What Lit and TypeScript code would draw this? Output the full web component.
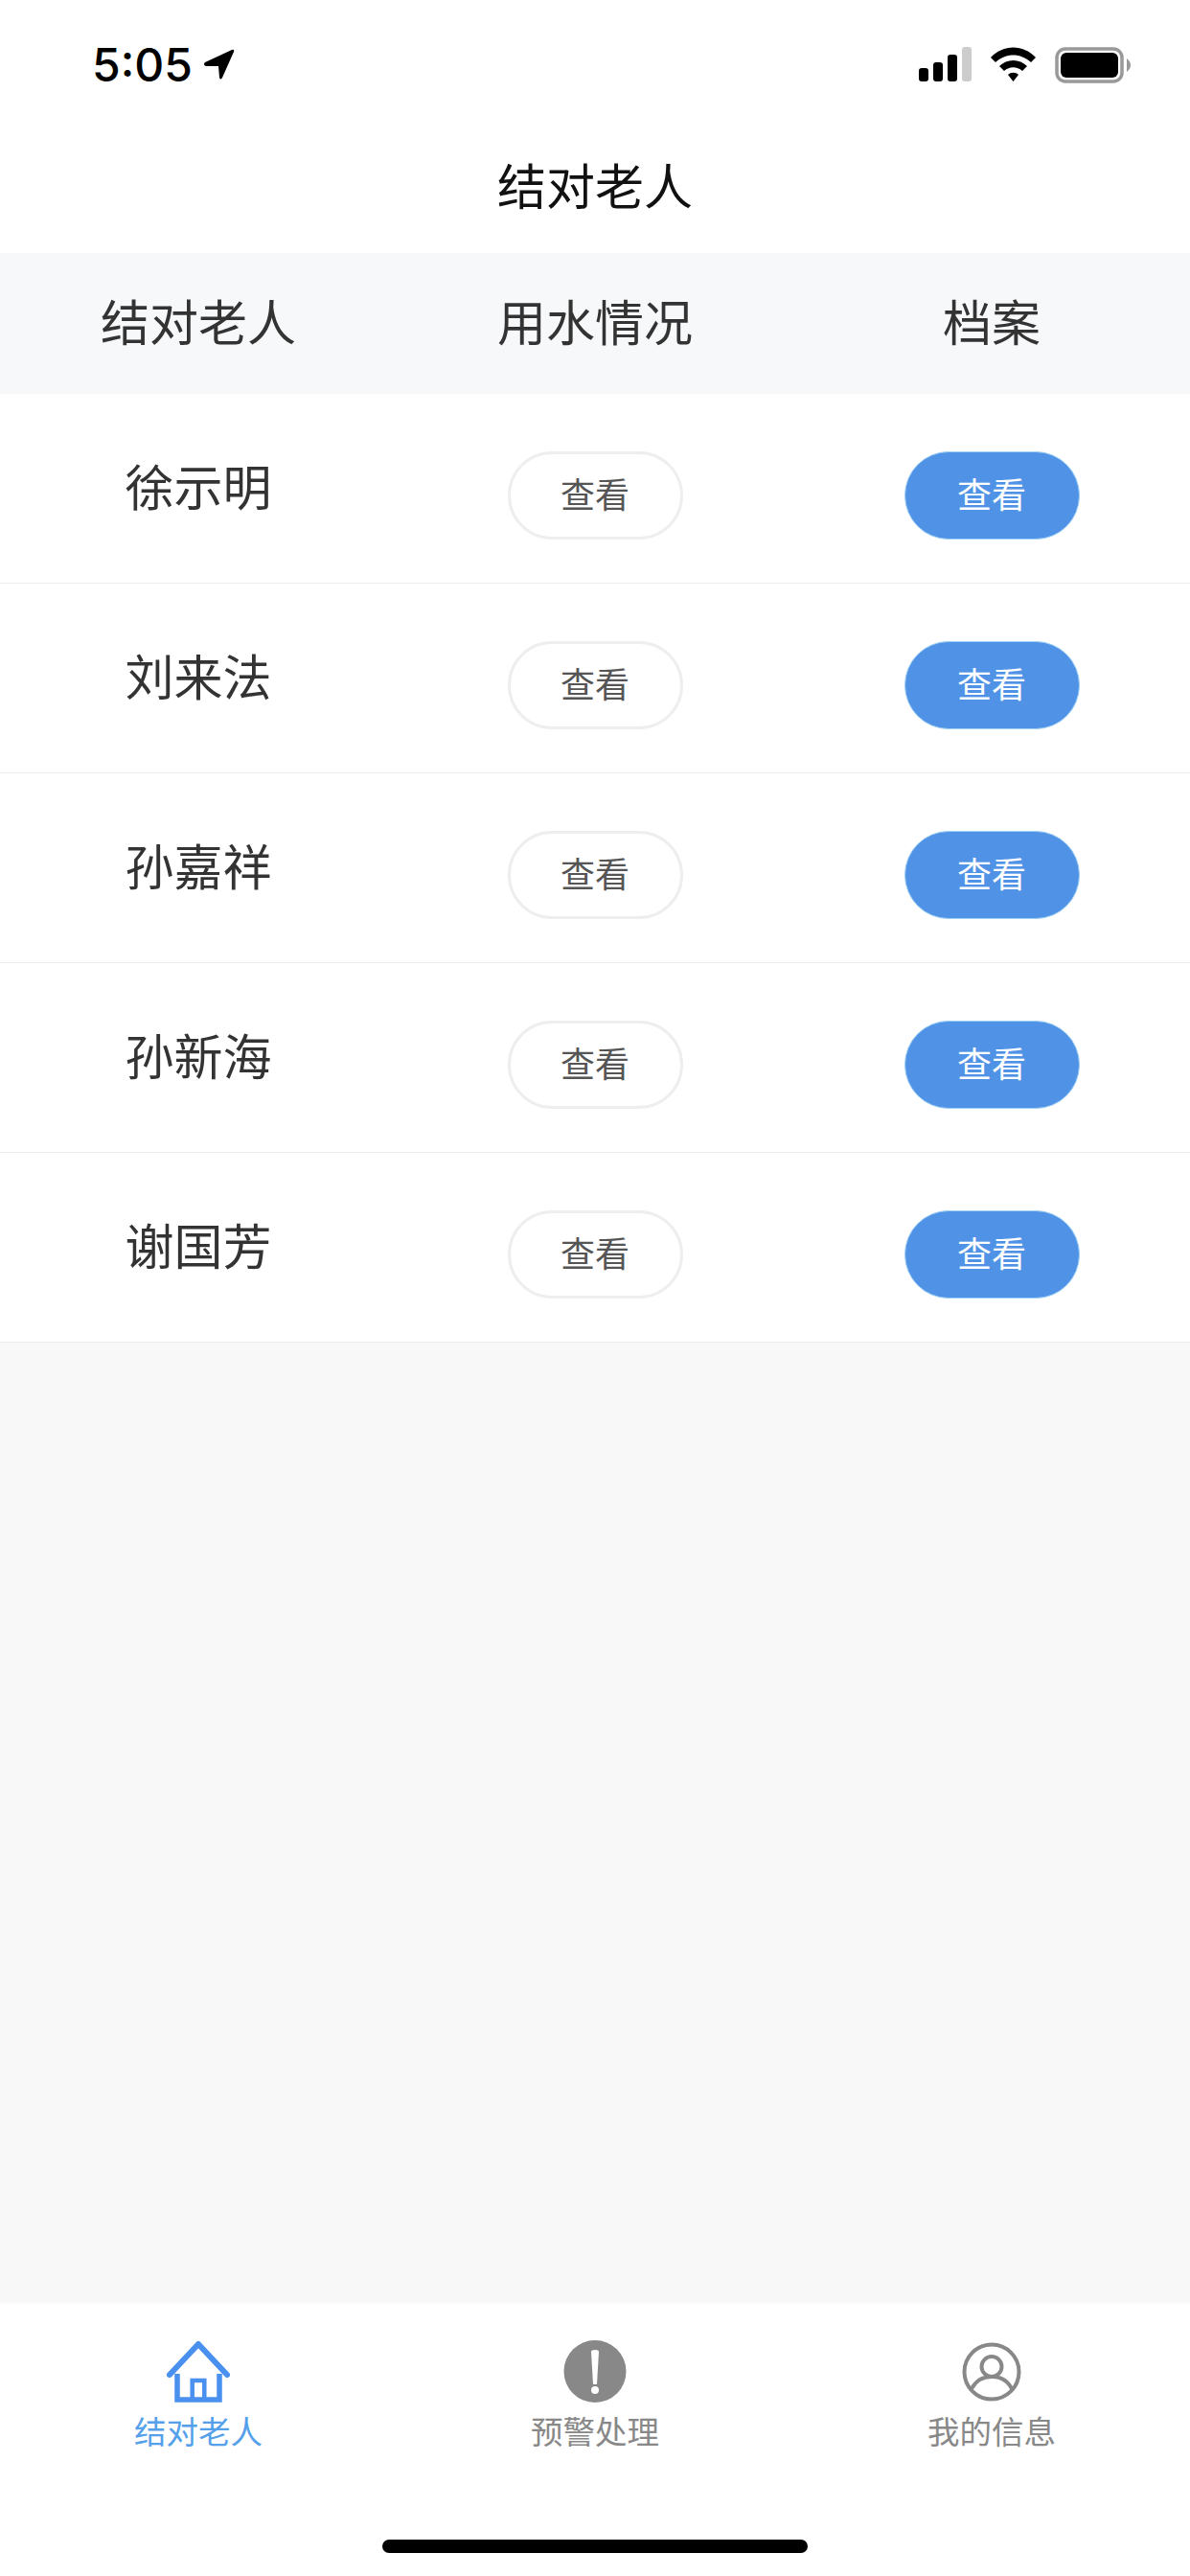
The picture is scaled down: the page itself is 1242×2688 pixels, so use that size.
import { LitElement, html, css, svg } from 'lit';
import { customElement } from 'lit/decorators.js';

const ELDERS = ['徐示明', '刘来法', '孙嘉祥', '孙新海', '谢国芳'];

const ICONS = {
    home: svg`<path d="M3 37 L33 5 L63 37" fill="none" stroke="#4a90ee" stroke-width="6" stroke-linecap="round" stroke-linejoin="round"/>
        <path d="M11 36 V63 H55 V36" fill="none" stroke="#4a90ee" stroke-width="5.500"/>
        <path d="M26.700 63 V43 H39.300 V63" fill="none" stroke="#4a90ee" stroke-width="4.500"/>`,
    alert: svg`<circle cx="33" cy="33.500" r="32.500" fill="#888"/>
        <path d="M29 13 Q29 11 33 11 Q37 11 37 13 L35 47 H31 Z" fill="#fff"/>
        <circle cx="33" cy="53" r="4" fill="#fff"/>`,
    user: svg`<circle cx="33" cy="34" r="28.500" fill="none" stroke="#888" stroke-width="4"/>
        <circle cx="33" cy="28.500" r="10.500" fill="none" stroke="#888" stroke-width="4"/>
        <path d="M11 54 C15 44 23 39 33 39 C43 39 51 44 55 54" fill="none" stroke="#888" stroke-width="4"/>`,
};

const TABS = [
    { label: '结对老人', icon: ICONS.home, active: true },
    { label: '预警处理', icon: ICONS.alert, active: false },
    { label: '我的信息', icon: ICONS.user, active: false },
];

@customElement('app-root')
export class AppRoot extends LitElement {
    static styles = css`
        :host {
            display: flex;
            flex-direction: column;
            width: 1242px;
            height: 2688px;
            background: #f8f8f8;
            font-family: 'Noto Sans CJK SC', 'Liberation Sans', sans-serif;
            color: #333;
        }

        .status {
            display: flex;
            justify-content: space-between;
            align-items: flex-start;
            height: 132px;
            box-sizing: border-box;
            padding: 49px 62px 0 96px;
            background: #fff;
        }

        .time {
            display: flex;
            align-items: center;
            gap: 11px;
            height: 37px;
            font-family: Inter, 'Liberation Sans', sans-serif;
            font-size: 48px;
            font-weight: 550;
            line-height: 37px;
            color: #000;
        }

        .time svg,
        .indicators svg {
            display: block;
        }

        .indicators {
            display: flex;
            align-items: flex-start;
            gap: 20px;
        }

        .title {
            height: 132px;
            background: #fff;
            font-size: 51px;
            line-height: 121px;
            text-align: center;
            color: #111;
        }

        .table-head,
        .row {
            display: grid;
            grid-template-columns: repeat(3, 1fr);
            align-items: center;
            justify-items: center;
        }

        .table-head {
            height: 147px;
            box-sizing: border-box;
            padding-bottom: 8px;
            background: #f7f8fa;
            font-size: 51px;
        }

        .row {
            height: 198px;
            box-sizing: border-box;
            background: #fff;
            border-bottom: 1px solid #ececec;
        }

        .row:last-of-type {
            border-bottom: none;
        }

        .name {
            font-size: 51px;
            padding-bottom: 8px;
        }

        .btn {
            display: flex;
            align-items: center;
            justify-content: center;
            width: 183px;
            height: 92px;
            margin-top: 14px;
            box-sizing: border-box;
            padding-bottom: 6px;
            border: 3px solid #eeeeee;
            border-radius: 46px;
            background: #fff;
            font-size: 36px;
            color: #555;
        }

        .btn.primary {
            border: 1px solid #9fd0f5;
            background: #4f92e6;
            color: #fff;
        }

        .spacer {
            flex: 1;
        }

        .tabbar {
            display: flex;
            flex-direction: column;
            align-items: center;
            height: 286px;
            box-sizing: border-box;
            padding-top: 37px;
            border-top: 2px solid #fbfbfb;
            background: #fff;
        }

        .tabs {
            display: grid;
            grid-template-columns: repeat(3, 1fr);
            width: 100%;
        }

        .tab {
            display: flex;
            flex-direction: column;
            align-items: center;
            font-size: 33.5px;
            line-height: 44px;
            color: #888;
        }

        .tab.active {
            color: #55a0ea;
        }

        .tab svg {
            display: block;
            margin-bottom: 6px;
        }

        .home-bar {
            width: 444px;
            height: 14px;
            margin-top: 92px;
            border-radius: 7px;
            background: #000;
        }
    `;

    render() {
        return html`
            <div class="status">
                <div class="time">
                    5:05
                    <svg width="33" height="33" viewBox="0 0 33 33">
                        <path d="M2 14 L30 1 Q33 0 32 3 L20 30 Q18 33 17 30 L16 18 L3 18 Q-0.500 16.500 2 14 Z" fill="#000"/>
                    </svg>
                </div>
                <div class="indicators">
                    <svg width="55" height="36" viewBox="0 0 55 36">
                        <rect x="0" y="22" width="10" height="14" rx="3" fill="#000"/>
                        <rect x="15" y="16" width="10" height="20" rx="3" fill="#000"/>
                        <rect x="30" y="8" width="10" height="28" rx="3" fill="#000"/>
                        <rect x="45" y="0" width="10" height="36" rx="3" fill="#ccc"/>
                    </svg>
                    <svg width="47" height="36" viewBox="0 0 47 36">
                        <path d="M0 11 C13 -3 34 -3 47 11 L42 16 C31 6 16 6 5 16 Z" fill="#000"/>
                        <path d="M9 20 C17 12 30 12 38 20 L33 25 C27 20 20 20 14 25 Z" fill="#000"/>
                        <path d="M18 29 C21 26 26 26 29 29 L23.500 36 Z" fill="#000"/>
                    </svg>
                    <svg width="79" height="38" viewBox="0 0 79 38">
                        <rect x="2" y="2" width="68" height="34" rx="9" fill="none" stroke="#999" stroke-width="3.500"/>
                        <rect x="6" y="6" width="60" height="26" rx="6" fill="#000"/>
                        <path d="M75 12 C78 14 79 17 79 19 C79 21 78 24 75 26 Z" fill="#999"/>
                    </svg>
                </div>
            </div>
            <div class="title">结对老人</div>
            <div class="table-head">
                <div>结对老人</div>
                <div>用水情况</div>
                <div>档案</div>
            </div>
            ${ELDERS.map(
                (name) => html`
                    <div class="row">
                        <div class="name">${name}</div>
                        <div class="btn">查看</div>
                        <div class="btn primary">查看</div>
                    </div>
                `
            )}
            <div class="spacer"></div>
            <div class="tabbar">
                <div class="tabs">
                    ${TABS.map(
                        (tab) => html`
                            <div class="tab ${tab.active ? 'active' : ''}">
                                <svg width="66" height="67" viewBox="0 0 66 67">${tab.icon}</svg>
                                ${tab.label}
                            </div>
                        `
                    )}
                </div>
                <div class="home-bar"></div>
            </div>
        `;
    }
}
